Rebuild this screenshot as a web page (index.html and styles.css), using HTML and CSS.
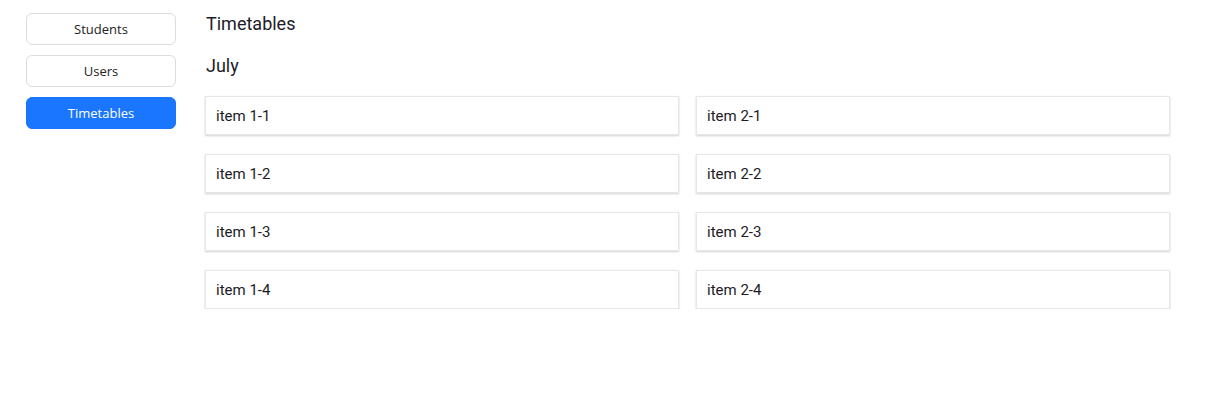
FILE: index.html
```html
<!DOCTYPE html>
<html>
<head>
<meta charset="utf-8">
<link rel="stylesheet" href="styles.css">
</head>
<body>
<div class="app">
  <nav class="sidebar">
    <button class="nav-btn">Students</button>
    <button class="nav-btn">Users</button>
    <button class="nav-btn active">Timetables</button>
  </nav>
  <main class="main">
    <h1 class="title">Timetables</h1>
    <h2 class="month">July</h2>
    <div class="grid">
      <div class="card">item 1-1</div>
      <div class="card">item 2-1</div>
      <div class="card">item 1-2</div>
      <div class="card">item 2-2</div>
      <div class="card">item 1-3</div>
      <div class="card">item 2-3</div>
      <div class="card">item 1-4</div>
      <div class="card">item 2-4</div>
    </div>
  </main>
</div>
</body>
</html>
```
FILE: styles.css
```css
html, body {
  margin: 0;
  padding: 0;
  background: #fff;
}
.app {
  display: flex;
  padding: 13px 0 0 26px;
  gap: 29px;
}
.sidebar {
  display: flex;
  flex-direction: column;
  gap: 10px;
  width: 150px;
  flex-shrink: 0;
}
.nav-btn {
  height: 32px;
  border: 1px solid #dcdcdc;
  border-radius: 6px;
  background: #fff;
  font-family: "Open Sans", sans-serif;
  font-size: 13px;
  color: #222;
  padding: 0;
  cursor: pointer;
}
.nav-btn.active {
  background: #1a76ff;
  border-color: #1a76ff;
  color: #fff;
}
.main {
  width: 965px;
  font-family: Roboto, sans-serif;
  color: #1c1c28;
}
.title {
  margin: 0;
  font-size: 18px;
  font-weight: 400;
  line-height: 21px;
  padding-left: 1px;
}
.month {
  margin: 21px 0 0;
  font-size: 18px;
  font-weight: 400;
  line-height: 21px;
  padding-left: 1px;
}
.grid {
  margin-top: 20px;
  display: grid;
  grid-template-columns: 474px 474px;
  column-gap: 17px;
  row-gap: 19px;
}
.card {
  height: 39px;
  box-sizing: border-box;
  border: 1px solid #e6e6ec;
  box-shadow: 0 1px 2px rgba(0, 0, 0, 0.18);
  background: #fff;
  display: flex;
  align-items: center;
  padding-left: 10px;
  font-size: 15px;
  color: #1c1c28;
}
```
